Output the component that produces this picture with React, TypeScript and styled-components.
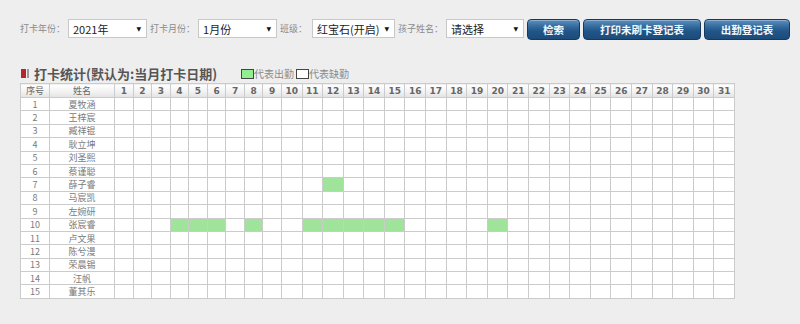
import React from "react";
import styled, { createGlobalStyle } from "styled-components";

const GlobalStyle = createGlobalStyle`
  html, body { margin: 0; padding: 0; background: #eeeeee; }
  body { font-family: "Noto Sans CJK SC", "Noto Sans", sans-serif; }
`;

const CJK = `"Noto Sans CJK SC", "Noto Sans", sans-serif`;

const Page = styled.div`
  width: 800px;
  height: 324px;
  box-sizing: border-box;
  padding: 19px 0 0 20px;
  background: #eeeeee;
  overflow: hidden;
`;

const Toolbar = styled.div`
  display: flex;
  align-items: flex-start;
  gap: 3px;
`;

const Label = styled.span<{ $pad?: number }>`
  font-family: ${CJK};
  font-size: 9px;
  color: #8a8a8a;
  line-height: 19px;
  white-space: nowrap;
  margin-right: ${(p) => p.$pad ?? 0}px;
`;

const SelectBox = styled.div<{ $w: number }>`
  display: flex;
  align-items: center;
  width: ${(p) => p.$w}px;
  height: 19px;
  box-sizing: border-box;
  border: 1px solid #c8c8c8;
  background: #fff;
  padding: 0 5px 0 4px;
`;

const NativeSelect = styled.select`
  appearance: none;
  -webkit-appearance: none;
  flex: 1;
  min-width: 0;
  height: 17px;
  border: 0;
  outline: 0;
  margin: 0;
  padding: 0;
  background: transparent;
  font-family: ${CJK};
  font-size: 11px;
  color: #222;
`;

const Arrow = styled.span`
  font-family: "DejaVu Sans", sans-serif;
  font-size: 6px;
  color: #111;
`;

const Button = styled.button<{ $w: number }>`
  width: ${(p) => p.$w}px;
  height: 21px;
  box-sizing: border-box;
  border: 1px solid #163a5e;
  border-radius: 4px;
  background: linear-gradient(to bottom, #5b8fc0 0%, #2f6597 40%, #215587 60%, #1c4b7a 100%);
  box-shadow: inset 0 1px 0 rgba(255, 255, 255, 0.3);
  color: #f4f7fb;
  font-family: ${CJK};
  font-weight: bold;
  font-size: 10.5px;
  padding: 0;
  cursor: pointer;
`;

const TitleRow = styled.div`
  display: flex;
  align-items: center;
  height: 19px;
  margin-top: 24px;
`;

const Marker = styled.span`
  display: flex;
  gap: 1px;
  margin-left: 1px;
`;

const MarkerBlock = styled.span<{ $w: number; $c: string }>`
  width: ${(p) => p.$w}px;
  height: 9px;
  background: ${(p) => p.$c};
`;

const Title = styled.span`
  margin-left: 5px;
  font-family: ${CJK};
  font-size: 13px;
  font-weight: bold;
  color: #555;
`;

const Legend = styled.div`
  display: flex;
  align-items: center;
  margin-left: 24px;
`;

const Swatch = styled.span<{ $c: string }>`
  width: 13px;
  height: 10px;
  box-sizing: border-box;
  border: 1px solid #444;
  background: ${(p) => p.$c};
`;

const LegendText = styled.span`
  font-family: ${CJK};
  font-size: 10px;
  color: #8a8a8a;
  margin-right: 2px;
`;

const Grid = styled.table`
  border-collapse: collapse;
  table-layout: fixed;
  width: 714px;
  background: #fff;
`;

const Col = styled.col<{ $w: number }>`
  width: ${(p) => p.$w}px;
`;

const HeadRow = styled.tr`
  height: 14px;
`;

const BodyRow = styled.tr`
  height: 13.4px;
`;

const HeadCell = styled.th<{ $cjk?: boolean }>`
  padding: 0;
  border: 1px solid #cbcbcb;
  background: linear-gradient(to bottom, #ffffff 0%, #f1f1f1 60%, #e2e2e2 100%);
  color: #666;
  text-align: center;
  line-height: 12px;
  font-family: ${(p) => (p.$cjk ? CJK : `"DejaVu Sans", sans-serif`)};
  font-weight: ${(p) => (p.$cjk ? "normal" : "bold")};
  font-size: 9px;
  overflow: hidden;
`;

const Cell = styled.td<{ $on?: boolean }>`
  padding: 0;
  border: 1px solid #cbcbcb;
  background: ${(p) => (p.$on ? "#a0e49c" : "#fff")};
  color: #7a7a7a;
  text-align: center;
  line-height: 11px;
  font-family: ${CJK};
  font-size: 9px;
  overflow: hidden;
  white-space: nowrap;
`;

const names = [
  "夏牧涵",
  "王梓宸",
  "臧祥锟",
  "耿立坤",
  "刘圣熙",
  "蔡谨聪",
  "薛子睿",
  "马宸凯",
  "左婉研",
  "张宸睿",
  "卢文果",
  "陈兮漫",
  "荣晨锡",
  "汪帆",
  "董其乐",
];

const attendance: Record<number, number[]> = {
  7: [12],
  10: [4, 5, 6, 8, 11, 12, 13, 14, 15, 20],
};

const days = Array.from({ length: 31 }, (_, i) => i + 1);

export default function App() {
  return (
    <Page>
      <GlobalStyle />
      <Toolbar>
        <Label>打卡年份：</Label>
        <SelectBox $w={79}>
          <NativeSelect defaultValue="2021">
            <option value="2021">2021年</option>
          </NativeSelect>
          <Arrow>▼</Arrow>
        </SelectBox>
        <Label>打卡月份：</Label>
        <SelectBox $w={79}>
          <NativeSelect defaultValue="1">
            <option value="1">1月份</option>
          </NativeSelect>
          <Arrow>▼</Arrow>
        </SelectBox>
        <Label $pad={2}>班级：</Label>
        <SelectBox $w={83}>
          <NativeSelect defaultValue="a">
            <option value="a">红宝石(开启)</option>
          </NativeSelect>
          <Arrow>▼</Arrow>
        </SelectBox>
        <Label>孩子姓名：</Label>
        <SelectBox $w={78}>
          <NativeSelect defaultValue="">
            <option value="">请选择</option>
          </NativeSelect>
          <Arrow>▼</Arrow>
        </SelectBox>
        <Button $w={53}>检索</Button>
        <Button $w={118}>打印未刷卡登记表</Button>
        <Button $w={86}>出勤登记表</Button>
      </Toolbar>

      <TitleRow>
        <Marker>
          <MarkerBlock $w={5} $c="#b3262b" />
          <MarkerBlock $w={2} $c="#9a9a9a" />
        </Marker>
        <Title>打卡统计(默认为:当月打卡日期)</Title>
        <Legend>
          <Swatch $c="#90ee90" />
          <LegendText>代表出勤</LegendText>
          <Swatch $c="#ffffff" />
          <LegendText>代表缺勤</LegendText>
        </Legend>
      </TitleRow>

      <Grid>
        <colgroup>
          <Col $w={29} />
          <Col $w={65} />
          {days.map((d) => (
            <Col key={d} $w={d < 10 ? 18.56 : 20.6} />
          ))}
        </colgroup>
        <thead>
          <HeadRow>
            <HeadCell $cjk>序号</HeadCell>
            <HeadCell $cjk>姓名</HeadCell>
            {days.map((d) => (
              <HeadCell key={d}>{d}</HeadCell>
            ))}
          </HeadRow>
        </thead>
        <tbody>
          {names.map((name, i) => {
            const on = attendance[i + 1] || [];
            return (
              <BodyRow key={name}>
                <Cell>{i + 1}</Cell>
                <Cell>{name}</Cell>
                {days.map((d) => (
                  <Cell key={d} $on={on.includes(d)} />
                ))}
              </BodyRow>
            );
          })}
        </tbody>
      </Grid>
    </Page>
  );
}
